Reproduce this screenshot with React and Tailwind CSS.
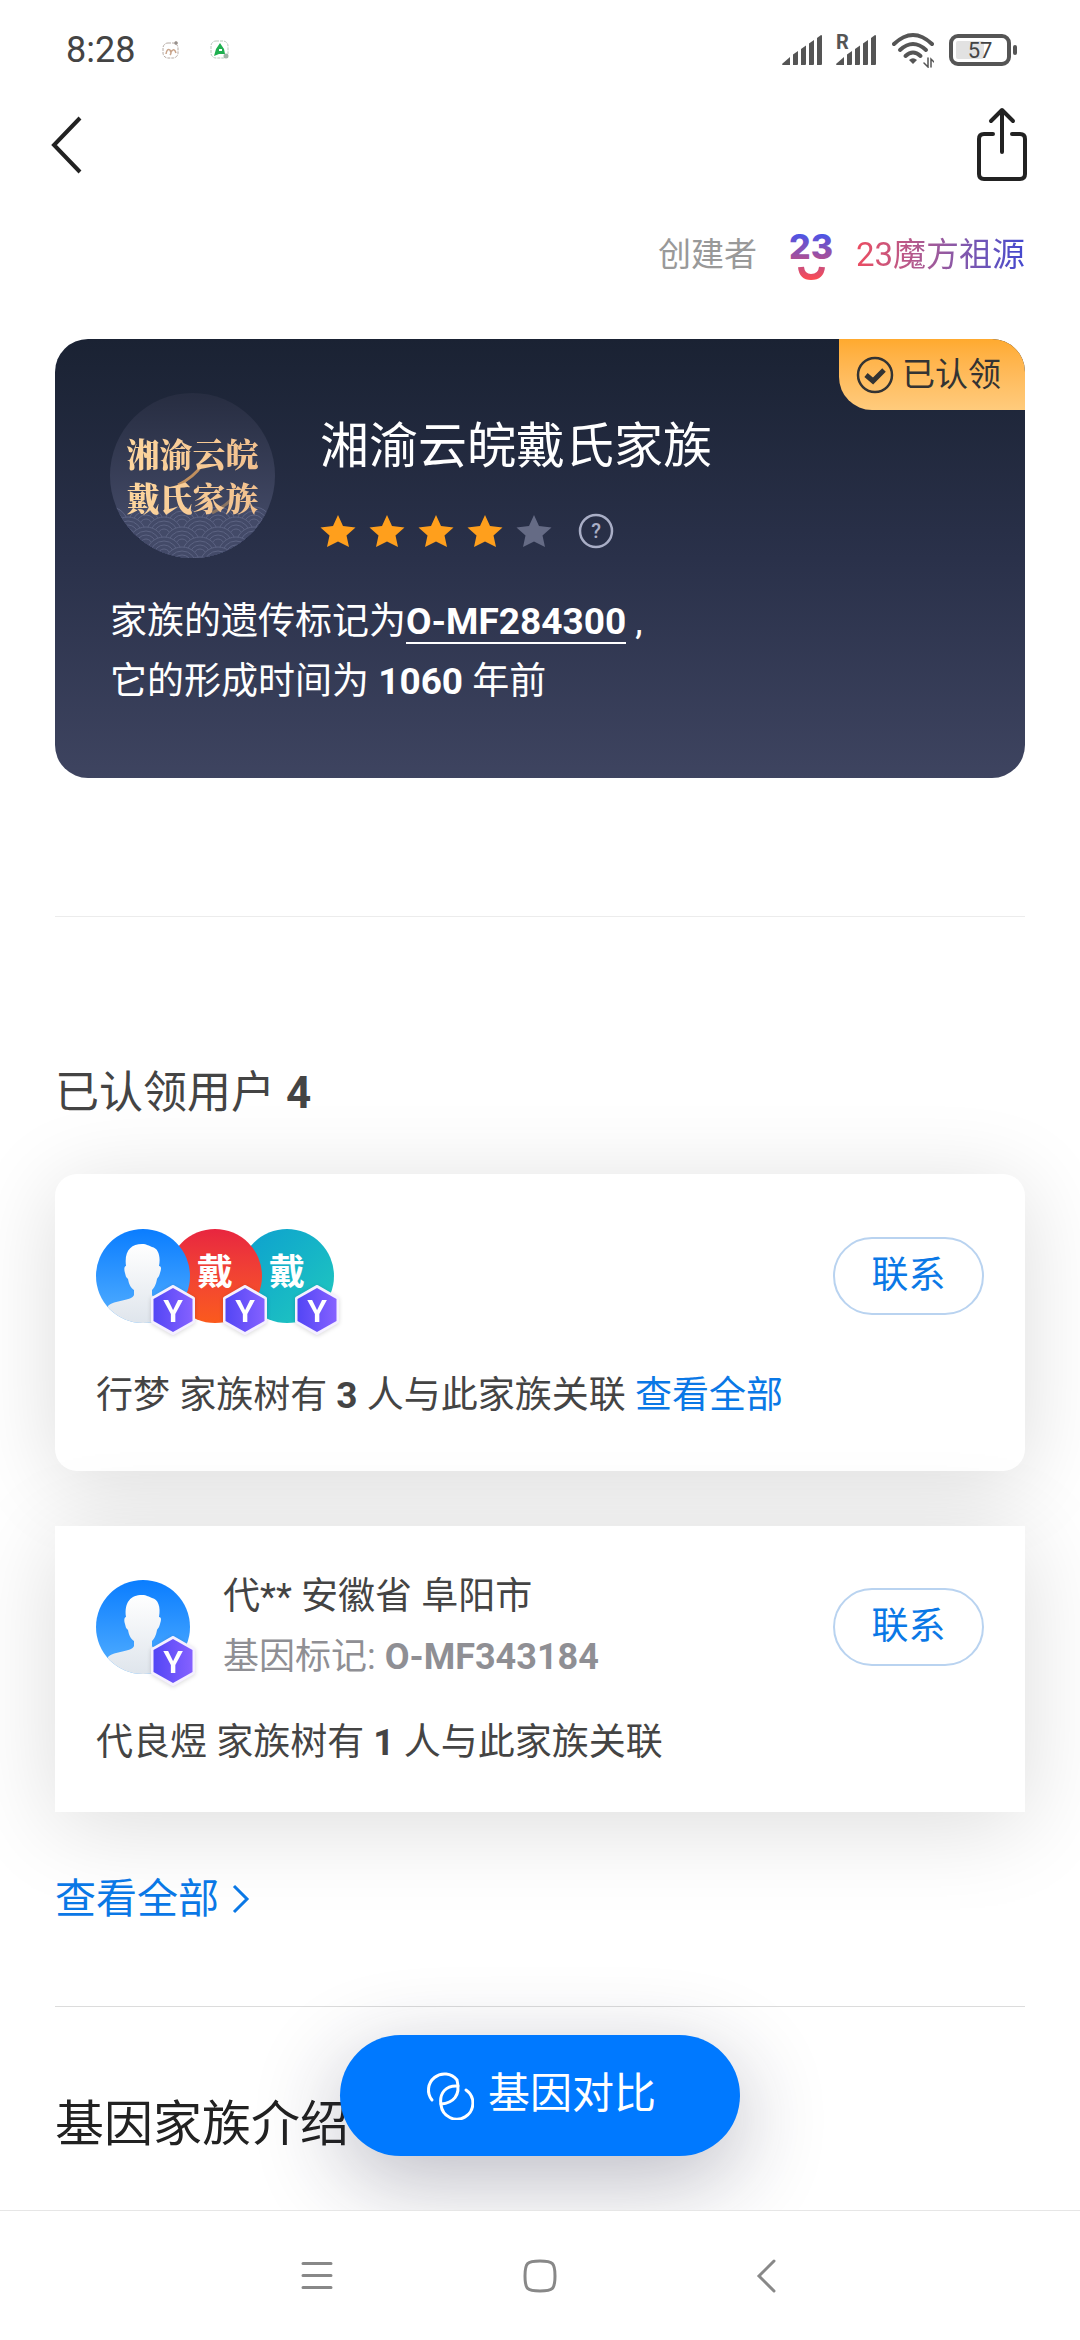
const SURNAME_AVATARS = [
  { id: 1, className: "bg-linear-to-b from-[#e8253f] to-[#fb5a1c]" },
  { id: 2, className: "bg-linear-to-br from-[#0f9fcf] to-[#22c9bd]" },
];

function SignalBars({ roaming }) {
  return (
    <svg className="w-[40px] h-[32px] overflow-visible" viewBox="0 0 40 32" fill="#555">
      <path d="M0 30 L8 23 V31 H1 Q0 31 0 30Z" />
      <path d="M11 31 V20.500 L16 17 V30 Q16 31 15 31Z" />
      <path d="M19 31 V15 L24 11.500 V30 Q24 31 23 31Z" />
      <path d="M27 31 V9.500 L32 6 V30 Q32 31 31 31Z" />
      <path d="M35 31 V4 L39 1 Q40 1 40 2 V30 Q40 31 39 31Z" />
      {roaming && (
        <text x="0" y="15" fontSize="20" fontWeight="700" fontFamily="Roboto, sans-serif">
          R
        </text>
      )}
    </svg>
  );
}

function StatusBar() {
  return (
    <div className="flex items-center justify-between h-[100px] pl-[66px] pr-[62px] text-[#444]">
      <div className="flex items-center">
        <span className="text-[36px] leading-[40px]">8:28</span>
        <svg className="ml-[26px] w-[20px] h-[20px]" viewBox="0 0 20 20" fill="none" stroke="#b5aaa4" strokeWidth="1">
          <rect x="2" y="3" width="15" height="15" rx="5" strokeDasharray="3 1" />
          <path d="M5 14 Q6 8 9 10 Q11 13 9 15 M10 12 Q13 7 15 13" stroke="#c9a58c" strokeWidth="1.500" />
          <circle cx="15" cy="3" r="1.500" fill="#888" />
        </svg>
        <svg className="ml-[29px] w-[20px] h-[20px]" viewBox="0 0 20 20">
          <rect x="1" y="1" width="17" height="17" rx="5" fill="none" stroke="#b9c9bd" strokeDasharray="3 1" />
          <path d="M10 3 L14 9 L15 14 H9 L4 16 L6 9Z" fill="#1fb050" />
          <rect x="9" y="9" width="3" height="2" fill="#fff" />
          <circle cx="16" cy="16" r="2.500" fill="#9fb3a6" />
        </svg>
      </div>
      <div className="flex items-center">
        <SignalBars />
        <div className="ml-[14px]">
          <SignalBars roaming />
        </div>
        <svg className="ml-[16px] w-[42px] h-[36px]" viewBox="0 0 42 36" fill="none" stroke="#555" strokeWidth="4" strokeLinecap="round">
          <path d="M2 12 Q21 -6 40 12" />
          <path d="M8 18 Q21 6 34 18" />
          <path d="M13.500 24 Q21 17 28.500 24" />
          <path d="M17 28 Q21 24.500 25 28 L21 32Z" fill="#555" stroke="none" />
          <path d="M36 26 V35 L32 31 M39 35 V27 L42 30" strokeWidth="1.500" />
        </svg>
        <svg className="ml-[15px] w-[69px] h-[32px]" viewBox="0 0 69 32">
          <rect x="2" y="2" width="58" height="28" rx="7" fill="none" stroke="#555" strokeWidth="4" />
          <rect x="7" y="7" width="28" height="18" rx="2" fill="#e2e2e2" />
          <rect x="64" y="11" width="4" height="10" rx="2" fill="#555" />
          <text x="31" y="24" textAnchor="middle" fontSize="22" fill="#444" fontFamily="Roboto, sans-serif">
            57
          </text>
        </svg>
      </div>
    </div>
  );
}

function TopBar() {
  return (
    <header className="flex items-center justify-between h-[90px] px-[50px]">
      <button type="button" aria-label="返回">
        <svg className="w-[34px] h-[58px]" viewBox="0 0 34 58" fill="none" stroke="#222" strokeWidth="4">
          <path d="M30 2 L4 29 L30 56" />
        </svg>
      </button>
      <button type="button" aria-label="分享">
        <svg className="w-[56px] h-[76px]" viewBox="0 0 56 76" fill="none" stroke="#222" strokeWidth="4" strokeLinecap="round" strokeLinejoin="round">
          <path d="M19 27 H10 Q5 27 5 32 V67 Q5 72 10 72 H46 Q51 72 51 67 V32 Q51 27 46 27 H38" />
          <path d="M28 45 V4 M17 14 L28 3 L39 14" />
        </svg>
      </button>
    </header>
  );
}

function Creator() {
  return (
    <div className="flex items-center justify-end h-[130px] text-[33px] leading-[40px]">
      <span className="text-[#999]">创建者</span>
      <svg className="ml-[31px] w-[46px] h-[50px]" viewBox="0 0 46 50" fill="none">
        <defs>
          <linearGradient id="logo" x1="0" y1="0" x2="0" y2="50" gradientUnits="userSpaceOnUse">
            <stop offset="0" stopColor="#3b55f5" />
            <stop offset="1" stopColor="#ff4b50" />
          </linearGradient>
        </defs>
        <text x="23" y="29" textAnchor="middle" fontSize="34" fontWeight="800" fontFamily="Inter, sans-serif" fill="url(#logo)">
          23
        </text>
        <path d="M13 37 Q14 47 23 47 Q33 47 34 37" stroke="url(#logo)" strokeWidth="6" />
      </svg>
      <a href="#creator" className="ml-[22px] bg-linear-to-r from-[#ec4a5f] to-[#4247cf] bg-clip-text text-transparent">
        23魔方祖源
      </a>
    </div>
  );
}

function FamilyEmblem() {
  const waves = [];
  for (let row = 0; row < 7; row++) {
    for (let col = -1; col < 6; col++) {
      waves.push({ x: col * 36 + (row % 2) * 18, y: 116 + row * 10 });
    }
  }
  return (
    <div className="relative w-[165px] h-[165px] shrink-0 rounded-full overflow-hidden bg-linear-to-b from-[#272d41] to-[#4a5170]">
      <svg className="absolute inset-0 w-full h-full" viewBox="0 0 165 165" fill="#434a68" stroke="#5c6382">
        {waves.map((wave) => (
          <g key={`${wave.x}-${wave.y}`}>
            <circle cx={wave.x} cy={wave.y + 16} r="18" />
            <circle cx={wave.x} cy={wave.y + 16} r="14" />
            <circle cx={wave.x} cy={wave.y + 16} r="10" />
            <circle cx={wave.x} cy={wave.y + 16} r="6" />
          </g>
        ))}
        <path d="M92 72 Q84 84 68 92" fill="none" stroke="#c08f5e" strokeWidth="3" />
        <path d="M122 106 Q114 114 102 120" fill="none" stroke="#8a7462" strokeWidth="3" />
      </svg>
      <div className="relative pt-[38px] text-center text-[33px] leading-[44px] font-black font-['Noto_Serif_CJK_SC','Noto_Sans_CJK_SC',serif] bg-linear-to-r from-[#ffd9a0] to-[#f0bd8c] bg-clip-text text-transparent">
        湘渝云皖
        <br />
        戴氏家族
      </div>
    </div>
  );
}

function Star({ filled }) {
  return (
    <svg className="w-[36px] h-[34px]" viewBox="0 0 36 34" fill={filled ? "#ff9f1c" : "#656b85"}>
      <path d="M18 1 L23 12 L35.500 13.500 L26.500 21.500 L29 33 L18 27.500 L7 33 L9.500 21.500 L0.500 13.500 L13 12Z" />
    </svg>
  );
}

function FamilyCard() {
  return (
    <section className="relative h-[439px] rounded-[33px] overflow-hidden bg-linear-to-b from-[#1a2233] via-[#2a314a] to-[#3e4460] px-[55px] pt-[54px] text-white">
      {/* Claimed badge */}
      <div className="absolute top-0 right-0 flex items-center h-[71px] pl-[17px] pr-[24px] rounded-bl-[33px] bg-linear-to-b from-[#ffaa2e] to-[#ffcb7c] text-[33px] text-[#333]">
        <svg className="mr-[8px] w-[38px] h-[38px]" viewBox="0 0 38 38" fill="none" stroke="#333">
          <circle cx="19" cy="19" r="17" strokeWidth="2.500" />
          <path d="M10 19 L17 25 L28 14" strokeWidth="5" />
        </svg>
        <span className="leading-[40px]">已认领</span>
      </div>

      <div className="flex">
        <FamilyEmblem />
        <div className="ml-[45px] pt-[19px]">
          <h1 className="text-[49px] leading-[70px]">湘渝云皖戴氏家族</h1>
          <div className="flex items-center mt-[31px] gap-[13px]">
            {[1, 2, 3, 4, 5].map((star) => (
              <Star key={star} filled={star < 5} />
            ))}
            <button type="button" aria-label="星级说明" className="ml-[13px]">
              <svg className="w-[36px] h-[36px]" viewBox="0 0 36 36" fill="none" stroke="#a9aec6">
                <circle cx="18" cy="18" r="16" strokeWidth="2.500" />
                <text x="18" y="25" textAnchor="middle" fontSize="20" fontWeight="500" fontFamily="Roboto, sans-serif" fill="#a9aec6" stroke="none">
                  ?
                </text>
              </svg>
            </button>
          </div>
        </div>
      </div>

      <p className="mt-[34px] text-[37px] leading-[60px]">
        家族的遗传标记为
        <a href="#marker" className="inline-block leading-[40px] border-b-2 border-white font-bold">
          O-MF284300
        </a>{" "}
        ,
        <br />
        它的形成时间为 <b>1060</b> 年前
      </p>
    </section>
  );
}

function HexBadge() {
  return (
    <svg className="absolute left-[53px] top-[54px] w-[48px] h-[54px] drop-shadow-sm" viewBox="0 0 48 54">
      <defs>
        <linearGradient id="hex" x1="0" y1="0" x2="1" y2="0">
          <stop offset="0" stopColor="#5346f5" />
          <stop offset="1" stopColor="#8561ff" />
        </linearGradient>
      </defs>
      <path d="M24 4 L44 15.500 V38.500 L24 50 L4 38.500 V15.500Z" fill="#f5f0ff" stroke="#f5f0ff" strokeWidth="4" strokeLinejoin="round" />
      <path d="M24 5 L43.500 16 V38 L24 49 L4.500 38 V16Z" fill="url(#hex)" />
      <text x="24" y="39" textAnchor="middle" fontSize="32" fontWeight="600" fontFamily="Roboto, sans-serif" fill="#fff">
        Y
      </text>
    </svg>
  );
}

function PersonAvatar() {
  return (
    <div className="relative z-30 w-[94px] h-[94px] shrink-0">
      <svg className="w-full h-full rounded-full" viewBox="0 0 94 94">
        <defs>
          <linearGradient id="sky" x1="0" y1="0" x2="0" y2="1">
            <stop offset="0" stopColor="#0a7dff" />
            <stop offset="1" stopColor="#55b0ff" />
          </linearGradient>
          <linearGradient id="body" x1="0" y1="0" x2="0" y2="1">
            <stop offset="0" stopColor="#fff" />
            <stop offset="1" stopColor="#dfe5ec" />
          </linearGradient>
        </defs>
        <rect width="94" height="94" fill="url(#sky)" />
        <path
          d="M30 37 C28 22 35 15 46 15 C51 15 53 17 56 18 C62 19 65 27 63 37 C66 37 65 41 64 44 C63 48 62 48 61 50 C60 56 58 59 56 61 V66 C58 72 75 71 81 77 V94 H12 V77 C18 71 36 72 38 66 V61 C35 59 33 56 32 50 C30 48 30 48 29 44 C28 41 28 37 30 37Z"
          fill="url(#body)"
        />
      </svg>
      <HexBadge />
    </div>
  );
}

function ContactButton() {
  return (
    <button type="button" className="w-[151px] h-[78px] shrink-0 rounded-full border-2 border-[#b9d3f0] text-[37px] leading-[40px] text-[#0a78e6]">
      联系
    </button>
  );
}

function ClaimedUsers() {
  return (
    <section className="pt-[144px]">
      <h2 className="text-[44px] leading-[64px] text-[#444]">
        已认领用户 <b>4</b>
      </h2>

      <article className="mt-[49px] h-[297px] px-[41px] pt-[55px] rounded-[22px] bg-white shadow-[0_12px_88px_rgba(0,0,0,0.14)]">
        <div className="flex items-center justify-between h-[94px]">
          <div className="flex">
            <PersonAvatar />
            {SURNAME_AVATARS.map((avatar) => (
              <div key={avatar.id} className={avatar.id === 1 ? "relative z-20 -ml-[22px]" : "relative z-10 -ml-[22px]"}>
                <div className={`w-[94px] h-[94px] rounded-full pt-[22px] text-center text-[36px] leading-[44px] font-bold text-white ${avatar.className}`}>
                  戴
                </div>
                <HexBadge />
              </div>
            ))}
          </div>
          <ContactButton />
        </div>
        <p className="mt-[43px] text-[37px] leading-[60px]">
          行梦 家族树有 <b>3</b> 人与此家族关联{" "}
          <a href="#all-relatives" className="text-[#0a78e6]">
            查看全部
          </a>
        </p>
      </article>

      <article className="relative z-40 mt-[55px] h-[286px] px-[41px] pt-[40px] bg-white shadow-[0_12px_88px_rgba(0,0,0,0.14)]">
        <div className="flex items-center h-[122px]">
          <PersonAvatar />
          <div className="ml-[33px] flex-1 leading-[60px]">
            <p className="text-[37px]">代** 安徽省 阜阳市</p>
            <p className="text-[36px] text-[#8f8f94]">
              基因标记: <b>O-MF343184</b>
            </p>
          </div>
          <ContactButton />
        </div>
        <p className="mt-[25px] text-[37px] leading-[60px]">
          代良煜 家族树有 <b>1</b> 人与此家族关联
        </p>
      </article>

      <a href="#all-users" className="relative z-50 mt-[59px] flex items-center text-[41px] leading-[56px] text-[#0a78e6]">
        查看全部
        <svg className="ml-[13px] w-[18px] h-[30px]" viewBox="0 0 18 30" fill="none" stroke="#0a78e6" strokeWidth="3">
          <path d="M2 2 L15 15 L2 28" />
        </svg>
      </a>
    </section>
  );
}

function CompareButton() {
  return (
    <button
      type="button"
      className="absolute z-50 left-1/2 -translate-x-1/2 bottom-[54px] flex items-center justify-center w-[400px] h-[121px] pb-[4px] rounded-full bg-[#0079ff] text-[42px] leading-[56px] text-white shadow-[0_24px_88px_rgba(30,30,60,0.3)]"
    >
      <svg className="mr-[14px] w-[50px] h-[52px]" viewBox="0 0 50 52" fill="none" stroke="#fff" strokeWidth="3" strokeLinecap="round">
        <path d="M8 32 A16 16 0 1 1 33 12 C37 28 29 35 17 36" />
        <path d="M34 18 C22 17 15 25 17 37 A16 16 0 1 0 42 22" />
      </svg>
      基因对比
    </button>
  );
}

function NavBar() {
  return (
    <nav className="relative z-50 flex items-center justify-center gap-[186px] h-[130px] border-t border-[#e6e6e6] bg-white">
      <button type="button" aria-label="最近任务">
        <svg className="w-[40px] h-[40px]" viewBox="0 0 40 40" stroke="#888" strokeWidth="3" strokeLinecap="round">
          <path d="M9 7.500 H37 M9 19.500 H37 M9 31.500 H37" />
        </svg>
      </button>
      <button type="button" aria-label="主屏幕">
        <svg className="w-[40px] h-[40px]" viewBox="0 0 40 40" fill="none" stroke="#888" strokeWidth="3">
          <path d="M20 5 C33 5 35 7 35 20 C35 33 33 35 20 35 C7 35 5 33 5 20 C5 7 7 5 20 5Z" />
        </svg>
      </button>
      <button type="button" aria-label="后退">
        <svg className="w-[40px] h-[40px]" viewBox="0 0 40 40" fill="none" stroke="#888" strokeWidth="3" strokeLinecap="round">
          <path d="M28 5 L13 20 L28 35" />
        </svg>
      </button>
    </nav>
  );
}

export default function App() {
  return (
    <div className="flex flex-col min-h-screen bg-white text-[#444] font-[Roboto,'Noto_Sans_CJK_SC',sans-serif]">
      <StatusBar />
      <TopBar />
      <main className="relative flex-1 px-[55px] pb-[50px] overflow-hidden">
        <Creator />
        <div className="mt-[19px]">
          <FamilyCard />
        </div>
        <hr className="mt-[138px] border-[#ececec]" />
        <ClaimedUsers />
        <hr className="mt-[79px] border-[#dcdcdc]" />
        <h2 className="mt-[83px] text-[49px] leading-[70px] text-[#222]">基因家族介绍</h2>
        <CompareButton />
      </main>
      <NavBar />
    </div>
  );
}
